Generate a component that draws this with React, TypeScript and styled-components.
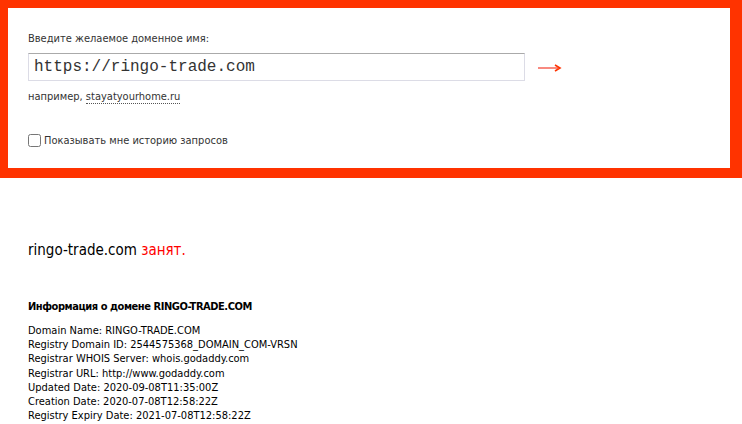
import React from 'react'
import styled, { createGlobalStyle } from 'styled-components'

const GlobalStyle = createGlobalStyle`
  body {
    margin: 0;
    background: #fff;
    font-family: Tahoma, "DejaVu Sans Condensed", "DejaVu Sans", sans-serif;
    font-stretch: condensed;
    color: #000;
  }
`;

const SearchBox = styled.div`
  border-style: solid;
  border-color: #ff3300;
  border-width: 8px 12px 10px 8px;
  padding: 24px 20px 21px 20px;
  font-size: 11px;
  color: #333;
`;

const Label = styled.div`
  line-height: 14px;
  margin-bottom: 7px;
`;

const InputRow = styled.div`
  display: flex;
  align-items: center;
  gap: 13px;
`;

const DomainInput = styled.input`
  box-sizing: border-box;
  width: 497px;
  height: 28px;
  padding: 0 5px;
  border: 1px solid #dcdce6;
  border-top-color: #aaa;
  font-family: "Liberation Mono", monospace;
  font-size: 16px;
  color: #333;
  outline: none;
`;

const Go = styled.svg`
  display: block;
  margin-top: 2px;
`;

const Example = styled.div`
  margin-top: 9px;
  line-height: 14px;
`;

const ExampleLink = styled.span`
  color: #333;
  border-bottom: 1px dotted #555;
`;

const HistoryRow = styled.label`
  display: flex;
  align-items: center;
  margin-top: 30px;
  gap: 3px;
`;

const Check = styled.input`
  margin: 0;
  width: 13px;
  height: 13px;
`;

const Result = styled.div`
  padding: 0 28px;
`;

const Status = styled.div`
  margin-top: 63px;
  font-size: 15px;
  line-height: 18px;
  color: #000;
`;

const Busy = styled.span`
  color: #ff0000;
`;

const InfoTitle = styled.div`
  margin-top: 41px;
  font-size: 11px;
  font-weight: bold;
  letter-spacing: -0.45px;
  line-height: 14px;
  color: #000;
`;

const InfoList = styled.div`
  margin-top: 10px;
  font-size: 11px;
  line-height: 14.2px;
  color: #000;
`;

const lines = [
  'Domain Name: RINGO-TRADE.COM',
  'Registry Domain ID: 2544575368_DOMAIN_COM-VRSN',
  'Registrar WHOIS Server: whois.godaddy.com',
  'Registrar URL: http://www.godaddy.com',
  'Updated Date: 2020-09-08T11:35:00Z',
  'Creation Date: 2020-07-08T12:58:22Z',
  'Registry Expiry Date: 2021-07-08T12:58:22Z',
];

export default function App() {
  return (
    <>
      <GlobalStyle />
      <SearchBox>
        <Label>Введите желаемое доменное имя:</Label>
        <InputRow>
          <DomainInput defaultValue="https://ringo-trade.com" />
          <Go width="24" height="8" viewBox="0 0 24 8">
            <line x1="0" y1="4" x2="20" y2="4" stroke="#f88a80" strokeWidth="2" />
            <path d="M17 1 L22 4 L17 7" fill="none" stroke="#ff3300" strokeWidth="1.6" />
          </Go>
        </InputRow>
        <Example>
          например, <ExampleLink>stayatyourhome.ru</ExampleLink>
        </Example>
        <HistoryRow>
          <Check type="checkbox" />
          Показывать мне историю запросов
        </HistoryRow>
      </SearchBox>
      <Result>
        <Status>
          ringo-trade.com <Busy>занят.</Busy>
        </Status>
        <InfoTitle>Информация о домене RINGO-TRADE.COM</InfoTitle>
        <InfoList>
          {lines.map((l) => (
            <div key={l}>{l}</div>
          ))}
        </InfoList>
      </Result>
    </>
  )
}
